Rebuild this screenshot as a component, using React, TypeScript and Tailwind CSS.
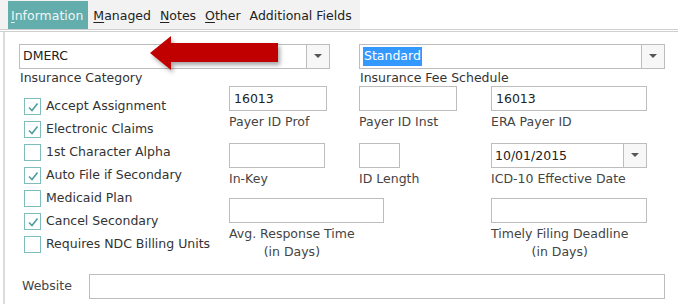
import React from 'react';

const font = { fontFamily: '"DejaVu Sans", Verdana, sans-serif' };

const Check: React.FC<{ checked?: boolean; label: string }> = ({ checked, label }) => (
    <div className="flex items-center h-[23px]">
        <div className="w-[17px] h-[17px] border-[1.5px] border-[#7fbcbc] bg-white flex items-center justify-center">
            {checked && (
                <svg width="12" height="12" viewBox="0 0 12 12">
                    <path d="M2 6.5 L5 9.5 L10.5 2.5" fill="none" stroke="#4f9e9e" strokeWidth="1.6" />
                </svg>
            )}
        </div>
        <span className="ml-[5px] text-[#333]">{label}</span>
    </div>
);

const Box: React.FC<{ w: string; value?: string }> = ({ w, value }) => (
    <div className={`${w} h-[25px] border border-[#bdbdbd] bg-white px-[4px] flex items-center text-[#222]`}>{value}</div>
);

const Combo: React.FC<{ w: string; children?: React.ReactNode }> = ({ w, children }) => (
    <div className={`${w} h-[25px] border border-[#bdbdbd] bg-white flex`}>
        <div className="flex-1 flex items-center px-[3px] text-[#222]">{children}</div>
        <div className="w-[23px] border-l border-[#bdbdbd] bg-[#f7f7f7] flex items-center justify-center">
            <svg width="8" height="5" viewBox="0 0 8 5"><path d="M0 0 H8 L4 4 Z" fill="#555" /></svg>
        </div>
    </div>
);

const Tab: React.FC<{ first: string; rest: string; active?: boolean }> = ({ first, rest, active }) => (
    <div className={`h-[28px] pt-[3px] flex items-center ${active ? 'bg-[#63adad] text-[#eef6f6] pl-[3px] pr-[5px]' : 'text-[#222] px-[4px]'}`}>
        <span className="underline underline-offset-2">{first}</span>{rest}
    </div>
);

export default function App() {
    return (
        <div className="w-[678px] h-[304px] bg-white relative overflow-hidden text-[12.5px]" style={font}>
            <div className="flex h-[32px] border-b-[3px] border-double border-[#cfcfcf]">
                <div className="w-[360px] bg-[#f2f2f2] flex items-end pl-[8px] gap-[1px]">
                    <Tab first="I" rest="nformation" active />
                    <Tab first="M" rest="anaged" />
                    <Tab first="N" rest="otes" />
                    <Tab first="O" rest="ther" />
                    <div className="h-[28px] pt-[3px] px-[4px] flex items-center text-[#222]">Additional Fields</div>
                </div>
            </div>
            <div className="ml-[3px] border-l-2 border-[#dcdcdc] h-[272px] pl-[14px] pt-[12px]">
                <div className="flex gap-[29px]">
                    <div>
                        <Combo w="w-[311px]">DMERC</Combo>
                        <div className="text-[#333] mt-[1px] leading-[16px] pl-[1px]">Insurance Category</div>
                    </div>
                    <div>
                        <Combo w="w-[306px]"><span className="bg-[#3399ff] text-white px-[1px]">Standard</span></Combo>
                        <div className="text-[#333] mt-[1px] leading-[16px] pl-[1px]">Insurance Fee Schedule</div>
                    </div>
                </div>
                <div className="flex">
                    <div className="w-[210px] pl-[5px] pt-[9px]">
                        <Check checked label="Accept Assignment" />
                        <Check checked label="Electronic Claims" />
                        <Check label="1st Character Alpha" />
                        <Check checked label="Auto File if Secondary" />
                        <Check label="Medicaid Plan" />
                        <Check checked label="Cancel Secondary" />
                        <Check label="Requires NDC Billing Units" />
                    </div>
                    <div className="flex flex-col text-[#444] leading-[16px]">
                        <div className="flex h-[57px]">
                            <div className="w-[130px]"><Box w="w-[98px]" value="16013" /><div className="mt-[3px]">Payer ID Prof</div></div>
                            <div className="w-[132px]"><Box w="w-[98px]" /><div className="mt-[3px]">Payer ID Inst</div></div>
                            <div><Box w="w-[156px]" value="16013" /><div className="mt-[3px]">ERA Payer ID</div></div>
                        </div>
                        <div className="flex h-[55px]">
                            <div className="w-[130px]"><Box w="w-[96px]" /><div className="mt-[3px]">In-Key</div></div>
                            <div className="w-[132px]"><Box w="w-[41px]" /><div className="mt-[3px]">ID Length</div></div>
                            <div><Combo w="w-[156px]">10/01/2015</Combo><div className="mt-[3px]">ICD-10 Effective Date</div></div>
                        </div>
                        <div className="flex">
                            <div className="w-[262px]">
                                <Box w="w-[155px]" />
                                <div className="inline-block text-center mt-[2px] leading-[18px]">Avg. Response Time<br />(in Days)</div>
                            </div>
                            <div>
                                <Box w="w-[156px]" />
                                <div className="inline-block text-center mt-[2px] leading-[18px]">Timely Filing Deadline<br />(in Days)</div>
                            </div>
                        </div>
                    </div>
                </div>
                <div className="flex items-center mt-[13px]">
                    <div className="w-[70px] pl-[3px] text-[#444]">Website</div>
                    <Box w="w-[576px]" />
                </div>
            </div>
            <svg className="absolute left-[140px] top-[30px]" width="150" height="50" viewBox="0 0 150 50">
                <defs>
                    <filter id="sh" x="-10%" y="-30%" width="130%" height="170%">
                        <feDropShadow dx="2" dy="3" stdDeviation="2" floodColor="#000" floodOpacity="0.35" />
                    </filter>
                </defs>
                <path d="M10 23 L31 6 L31 13 L138 13 L138 32 L31 32 L31 40 Z" fill="#c00000" filter="url(#sh)" />
            </svg>
        </div>
    );
}
